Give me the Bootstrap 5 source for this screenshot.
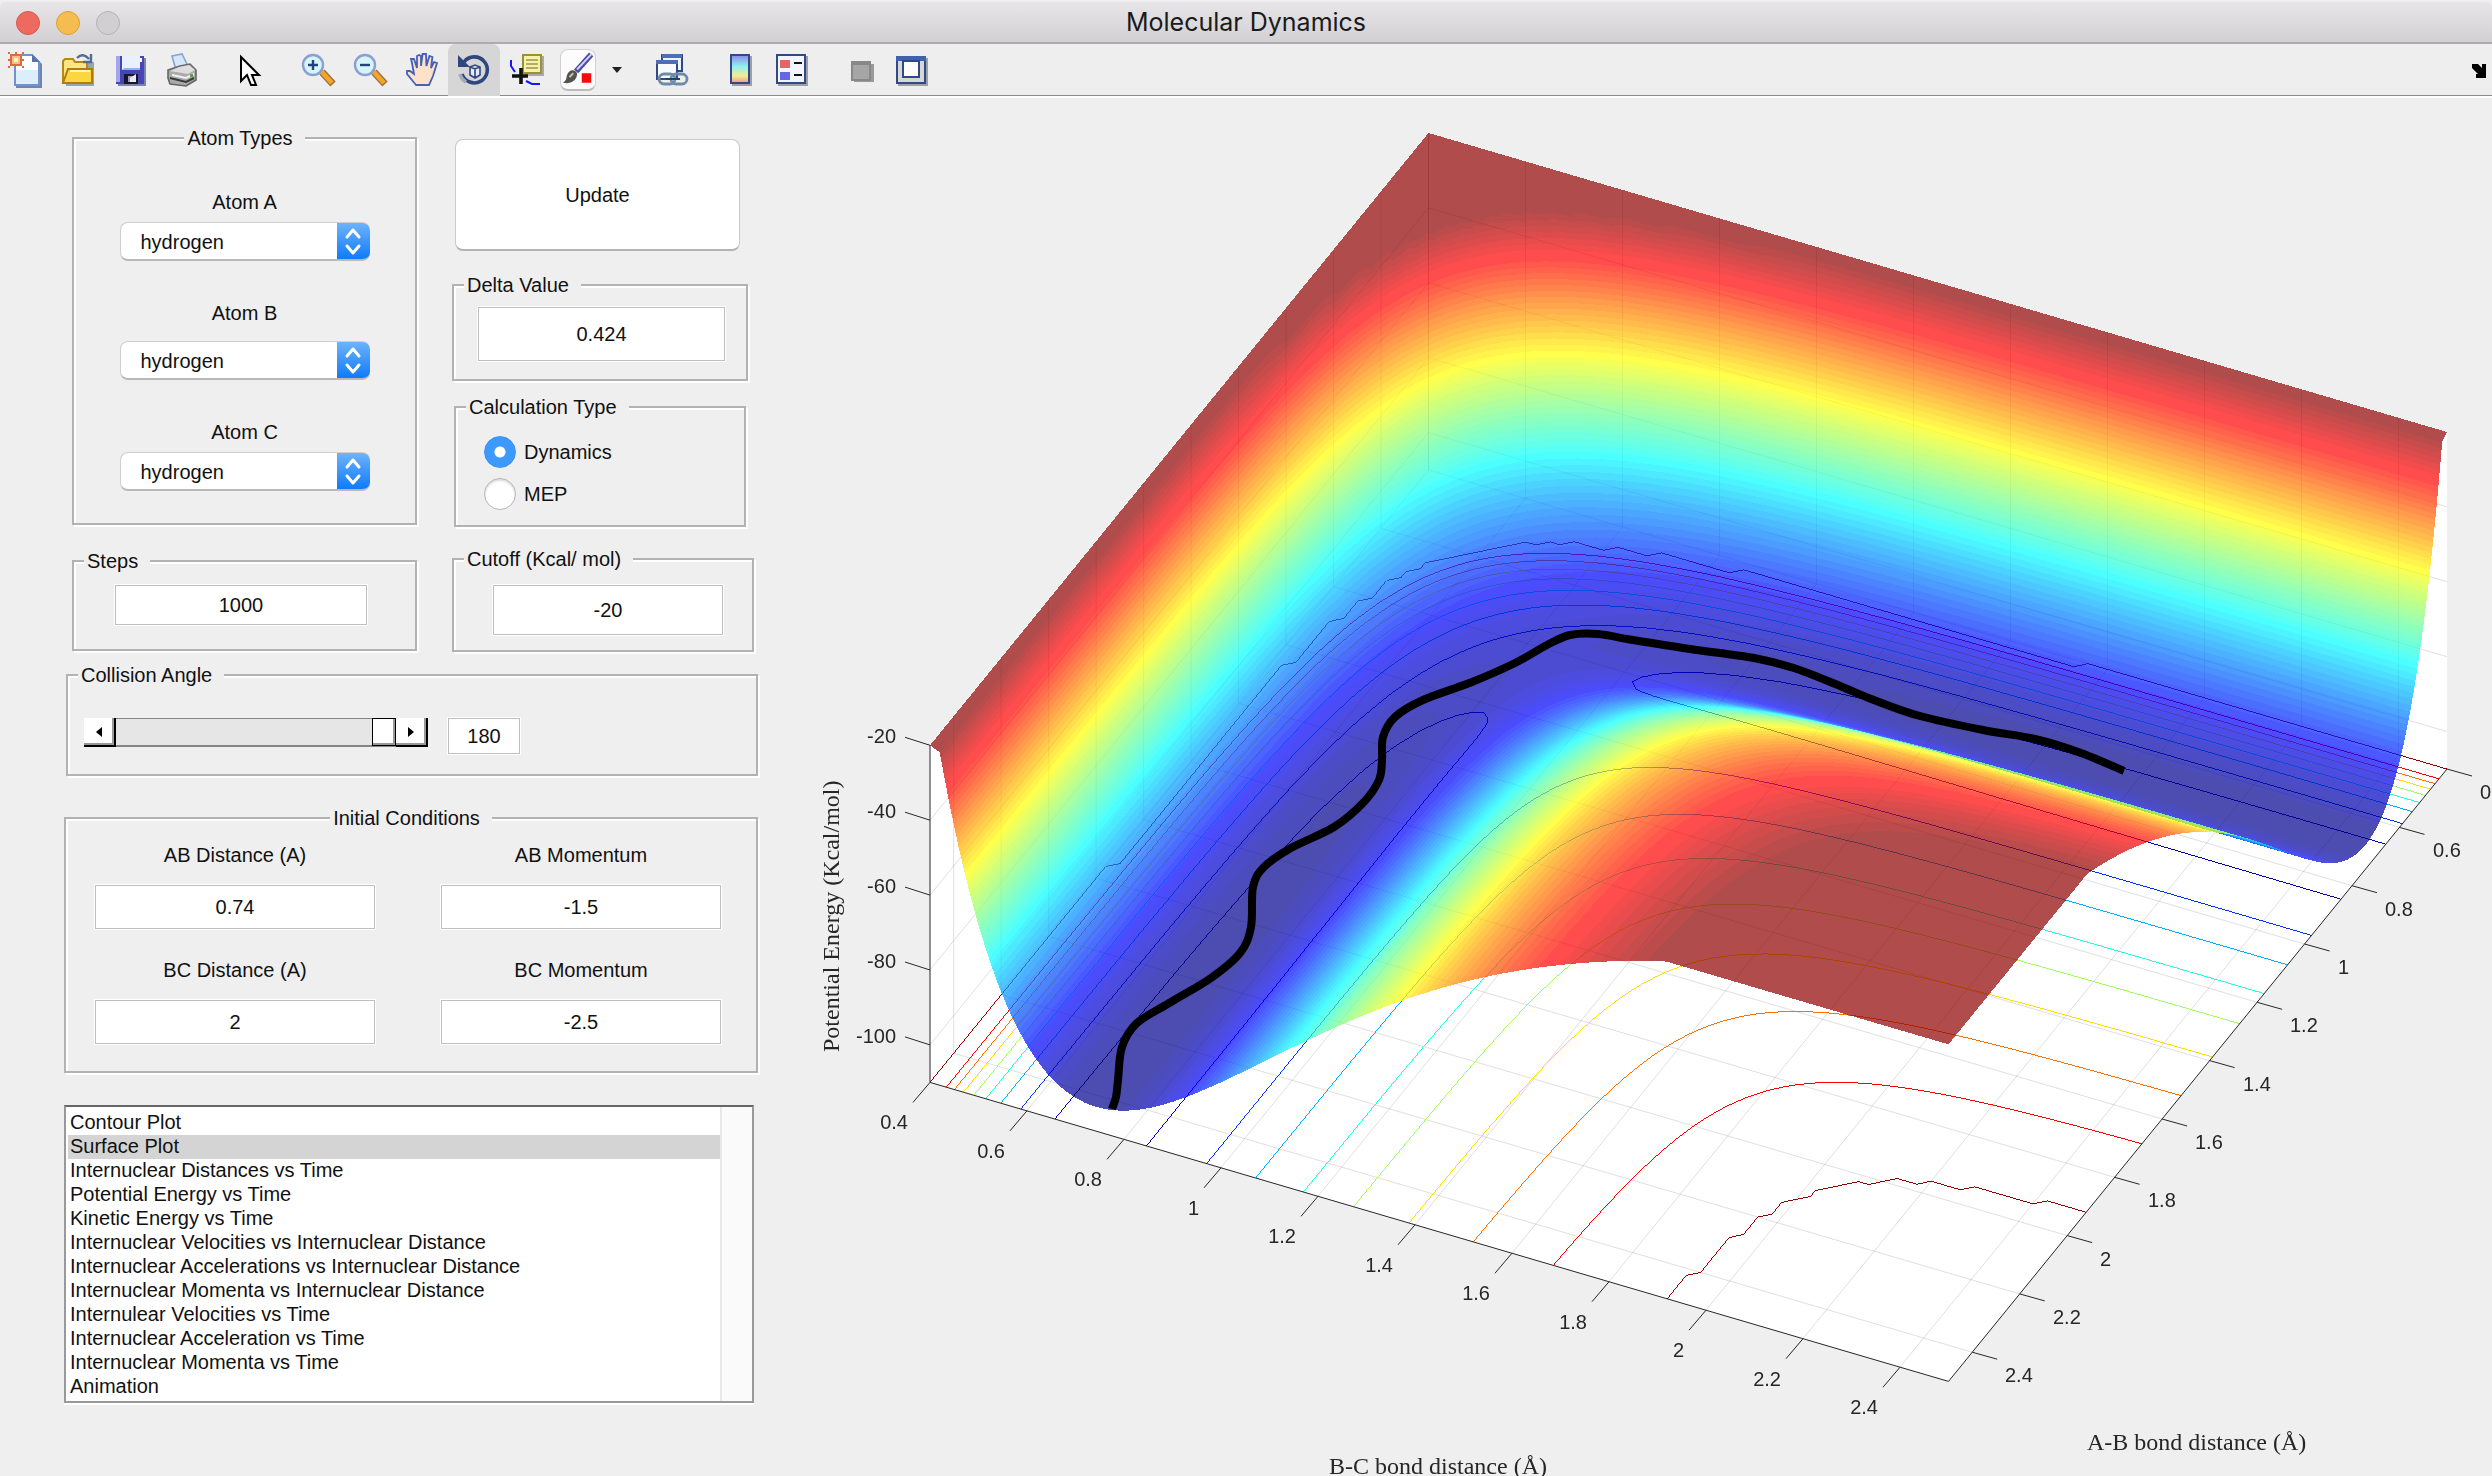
<!DOCTYPE html>
<html lang="en">
<head>
<meta charset="utf-8">
<meta name="viewport" content="width=device-width, initial-scale=1">
<title>Molecular Dynamics</title>
<link href="https://cdn.jsdelivr.net/npm/bootstrap@5.3.0/dist/css/bootstrap.min.css" rel="stylesheet">
<style>
:root{--face:#efefef;--etch:#b2b2b2}
body{background:var(--face);color:#111;font-family:"Liberation Sans",Arial,sans-serif;font-size:20px;line-height:24px;overflow-x:hidden}
.titlebar{height:44px;background:linear-gradient(#f4f2f4,#e7e5e7 3px,#d2d0d2);border-bottom:2px solid #adabad;border-radius:8px 8px 0 0;display:grid;grid-template-columns:1fr auto 1fr}
.titlebar h1{font:400 25px/45px Inter,"Liberation Sans",sans-serif;color:#1a1a1a}
.light{width:24px;height:24px;border-radius:50%;border:1px solid #d9584e;background:#ee6a5f;padding:0}
.light.mid{background:#f5bd4f;border-color:#d8a03c}
.light.off{background:#d1cfd1;border-color:#b4b2b4}
.tools{height:54px;background:#eee;border-bottom:2px solid #fff;box-shadow:inset 0 -1px 0 #8c8c8c}
.tool{width:52px;height:52px;border:0;background:none;padding:0;display:flex;align-items:center;justify-content:center}
.tool svg{display:block;width:36px;height:36px}
.tool svg.caret{width:10px}.tool svg.dock{width:18px}
.tool.active{background:#d6d6d6;border-radius:8px 8px 0 0}
.tool .swatchbox{border:1px solid #d0d0d0;border-bottom:2px solid #bcbcbc;border-radius:8px;background:#fcfcfc;height:42px}
.panel-side{width:800px;flex:none;padding:28px 40px 0 64px}
.etched{border:2px solid var(--etch);box-shadow:2px 2px 0 #fff,inset 2px 2px 0 #fff;margin:0 2px 2px 0}
.etched legend{float:none;width:auto;font-size:20px;line-height:24px;margin:0 0 0 10px;padding:0 12px 0 3px;background:var(--face)}
.etched.centred legend{margin:0 auto}
.col-a{width:347px}.col-b{width:304px}
.entry{border:1px solid #bfbfbf;box-shadow:0 0 0 1px #fff;background:#fff;border-radius:0;text-align:center;padding:0;font-size:20px;line-height:24px;color:#111;display:block}
.popup{appearance:none;width:250px;height:39px;border:1px solid #cfcfcf;border-bottom:2px solid #b9b9b9;border-right:0;border-radius:8px;padding:2px 40px 0 20px;font-size:20px;line-height:24px;color:#111;background:#fff url("data:image/svg+xml,%3Csvg xmlns='http://www.w3.org/2000/svg' width='33' height='39'%3E%3Cdefs%3E%3ClinearGradient id='g' x2='0' y2='1'%3E%3Cstop stop-color='%236fb5fb'/%3E%3Cstop offset='1' stop-color='%230a77fb'/%3E%3C/linearGradient%3E%3C/defs%3E%3Cpath fill='url(%23g)' d='M0 0h33v39H0z'/%3E%3Cpath fill='none' stroke='%23fff' stroke-width='3' stroke-linecap='round' stroke-linejoin='round' d='M10 15l6-7 6 7M10 24l6 7 6-7'/%3E%3C/svg%3E") right top/33px 39px no-repeat;background-origin:border-box}
.push{display:block;width:285px;height:112px;margin:13px 0 0 3px;border:1px solid #c9c9c9;border-bottom:2px solid #b3b3b3;border-radius:8px;background:#fff;color:#111;font-size:20px;line-height:24px}
.pick{appearance:none;width:32px;height:32px;border-radius:50%;border:1px solid #b5b5b5;background:#fff;margin:0;box-shadow:inset 0 2px 2px #ddd}
.pick:checked{border-color:#3a93f8;box-shadow:none;background:radial-gradient(circle,#fff 5px,#3d9afc 6px)}
.steps{margin-top:24px}.steps .entry{width:252px;height:40px;margin:12px auto 24px 41px}
.delta{width:296px;margin-top:22px}.delta .entry{width:247px;height:54px;margin:10px auto 18px 24px}
.calc{width:292px;margin:14px 0 0 2px}.calc-list{display:grid;row-gap:10px;padding:17px 0 15px 28px}
.cutoff{width:302px;margin-top:20px}.cutoff .entry{width:230px;height:50px;margin:14px auto 15px 39px}
.collision{margin:9px 2px 0 2px}.collision-row{margin:31px 0 20px 16px}
.degrees{width:72px;height:36px;margin-left:20px}
.arrow-btn{width:32px;height:29px;border:0;padding:0;background:#fff;border-right:2px solid #000;border-bottom:2px solid #000;box-shadow:inset -2px -2px 0 #999;display:flex;align-items:center;justify-content:center}
.angle{appearance:none;width:280px;height:29px;margin:0;background:#e6e6e6;border-top:1px solid #858585;border-bottom:2px solid #858585}
.angle::-webkit-slider-thumb{appearance:none;width:24px;height:28px;border:1px solid #000;border-radius:0;background:#fff;box-shadow:inset -2px -2px 0 #999}
.initial{margin:30px 0 0 0;width:694px}
.pairs{display:grid;grid-template-columns:280px 280px;column-gap:66px;row-gap:29px;padding:13px 0 27px 29px}
.pairs label{display:block;text-align:center;margin-bottom:18px}.pairs .entry{width:280px;height:44px}
.plots{appearance:none;display:block;width:690px;height:298px;margin-top:32px;border:2px solid #999;border-top-color:#666;border-radius:0;background:linear-gradient(90deg,#e9e9e9 2px,#fafafa 2px) right/32px 100% no-repeat #fff;box-shadow:0 2px 0 #fff;font-size:20px;line-height:24px;color:#111;padding:4px 32px 2px 2px;overflow:hidden}
.plots option{padding:0 2px;min-height:24px;line-height:24px;color:#111}
.plots option:checked{background:linear-gradient(#d4d4d4,#d4d4d4);color:#111}
.chart{position:relative;min-width:0}
.chart canvas{display:block;width:100%;height:auto}
.chart svg{position:absolute;inset:0;width:100%;height:100%}
.axis-line{stroke:#262626;stroke-width:1;fill:none}
.tick-label{font:20px "Liberation Sans",Arial,sans-serif;fill:#262626}
.axis-title{font:24px "Liberation Serif","Times New Roman",serif;fill:#262626}
</style>
<script src="https://cdn.jsdelivr.net/npm/bootstrap@5.3.0/dist/js/bootstrap.bundle.min.js"></script>
</head>
<body>
<header class="titlebar">
  <div class="d-flex align-items-center gap-3 ps-3">
    <button class="light" aria-label="Close"></button><button class="light mid" aria-label="Minimise"></button><button class="light off" aria-label="Zoom window"></button>
  </div>
  <h1 class="m-0">Molecular Dynamics</h1>
</header>

<nav class="tools d-flex align-items-start" aria-label="Figure tools">
  <button class="tool" aria-label="New figure"><svg viewBox="0 0 18 18"><path d="M4 2h9l4 4v12H4z" fill="#7384a8"/><path d="M3 1h9.500l3.500 3.500V17H3z" fill="#fff"/><path d="M4 9h11v7H4z" fill="#dceefc"/><path d="M3.500 1.500H12l3.500 3.500v11.500h-12z" fill="none" stroke="#6f93d2"/><path d="M12 1v4h4z" fill="#5873ae"/><path d="M1.500 1.500h5v5h-5z" fill="#f6c08c" stroke="#dd6a45"/><path d="M3 3h2v2H3z" fill="#fff3b0"/><path d="M0 0h1v1H0zM7 0h1v1H7zM0 7h1v1H0zM7 7h1v1H7zM3.500 0h1v1h-1zM0 3.500h1v1H0zM7 3.500h1v1H7z" fill="#dd6a45"/></svg></button>
  <button class="tool" aria-label="Open"><svg viewBox="0 0 18 18"><path d="M2 5h15v12H3z" fill="#9aa3b0"/><path d="M1.500 15.500V4.500l1-1h4l1 1.500h6v3" fill="#ffe680" stroke="#b58a12"/><path d="M1.500 15.500L4 8.500h12v7z" fill="#fbd63f" stroke="#b07c10"/><path d="M5 9.500h10" stroke="#fff7b5"/><path d="M8.500 3q3-3 6 0.500M15.500 1v4h-4" fill="none" stroke="#526c95" stroke-width="1.200"/></svg></button>
  <button class="tool" aria-label="Save"><svg viewBox="0 0 18 18"><path d="M3 3h14v14H3z" fill="#7a86a5"/><path d="M2 2h14v14H2z" fill="#4745b4"/><path d="M2 2h2v13H2z" fill="#a3a6ed"/><path d="M5 2h9v7H5z" fill="#e9f1ff"/><path d="M5 9h9V8H6z" fill="#8eb6ee"/><path d="M6 11h7v5H6z" fill="#15152b"/><path d="M8 12h3v3H8z" fill="#9c9ca8"/><path d="M9 13l3-2v4H9z" fill="#e8e8ee"/><path d="M14 3h1v2h-1z" fill="#fff"/></svg></button>
  <button class="tool" aria-label="Print"><svg viewBox="0 0 18 18"><path d="M4 2l5-1 3 6-6 2z" fill="#d3e6fd" stroke="#8ba2cc" stroke-width=".8"/><path d="M2 9l6-2 5-1 3 3v5l-5 3-8-1-1-3z" fill="#aaa" stroke="#666" stroke-width=".8"/><path d="M3 9.500l9 1.500 3.500-2-3-2.500-5 1z" fill="#ddd"/><path d="M3 13l8 2 4-2" stroke="#3a3a3a" fill="none"/><path d="M4 11.500l7 1.500 4-2" stroke="#f1f1f1" fill="none"/><path d="M13 11h1.500v1.500H13z" fill="#58a34b"/></svg></button>
  <button class="tool ms-3" aria-label="Edit plot"><svg viewBox="0 0 18 18"><path d="M4.500 2.500v12l3-3 2 5h2.500l-2-5h3.500z" fill="#fff" stroke="#000"/></svg></button>
  <button class="tool ms-3" aria-label="Zoom in"><svg viewBox="0 0 18 18"><path d="M11 10l5.500 6" stroke="#9a7140" stroke-width="3.600"/><path d="M10.500 9.500l5.500 6" stroke="#f5a52b" stroke-width="2.400"/><circle cx="6.500" cy="6.500" r="5" fill="#d7f4f7" stroke="#8a9fd4" stroke-width="1.200"/><path d="M4 6.500h5M6.500 4v5" stroke="#22437f" stroke-width="1.200"/></svg></button>
  <button class="tool" aria-label="Zoom out"><svg viewBox="0 0 18 18"><path d="M11 10l5.500 6" stroke="#9a7140" stroke-width="3.600"/><path d="M10.500 9.500l5.500 6" stroke="#f5a52b" stroke-width="2.400"/><circle cx="6.500" cy="6.500" r="5" fill="#d7f4f7" stroke="#8a9fd4" stroke-width="1.200"/><path d="M4 6.500h5" stroke="#22437f" stroke-width="1.200"/></svg></button>
  <button class="tool" aria-label="Pan"><svg viewBox="0 0 18 18"><path d="M6 16.500L1.500 11V9.500h1.500l2 1.500L4 5.500l-.500-2h1.500L6.500 8V2l1-.500 1 .500v5l.8-6h1.700l.2 6 1.500-5 1.500.5-.7 5.500 1.500-3 1.500.5-2 6.500-2 4.500z" fill="#fde1c9" stroke="#4460b8" stroke-width=".9"/></svg></button>
  <button class="tool active" aria-label="Rotate 3D" aria-pressed="true"><svg viewBox="0 0 18 18"><path d="M4 5a6.500 6.500 0 1 1-1 6" fill="none" stroke="#2f477e" stroke-width="1.800"/><path d="M2 11a6.500 6.500 0 0 0 3 4" fill="none" stroke="#a4a9b7" stroke-width="1.800"/><path d="M1 1.500v6h6z" fill="#2f477e"/><path d="M7 7.500l2.500-1 2.500 1v4l-2.500 1.500L7 11.500zM7 7.500l2.500 1 2.500-1M9.500 8.500V13" fill="#e6ecf7" stroke="#2f477e" stroke-width=".8"/></svg></button>
  <button class="tool" aria-label="Data cursor"><svg viewBox="0 0 18 18"><path d="M8 2h10v10H8z" fill="#a9a9a9"/><path d="M7.500 1.500h9v9h-9z" fill="#f6f3a7" stroke="#9a9130"/><path d="M9 4h6M9 6h6M9 8h6" stroke="#99955a" stroke-width=".8"/><path d="M1.500 4v3l2 3M9 14.500l3 1.500h4" fill="none" stroke="#1616ff"/><path d="M2 12h8M6.500 8v8" stroke="#111" stroke-width="1.800"/></svg></button>
  <button class="tool" aria-label="Brush"><svg class="swatchbox" viewBox="0 0 18 18"><path d="M8 10L16 1" stroke="#4b4ba5" stroke-width="3"/><path d="M8.500 9L16 1" stroke="#d6d6f8" stroke-width="1"/><path d="M1 16q2-1 2-3.500Q4 9 7 9.500q2.500 1 1 4Q6 17 1 16z" fill="#55544c"/><path d="M4.500 13l2-2" stroke="#c9c8bb"/><path d="M11 11h5v5h-5z" fill="#f90b0b"/></svg></button>
  <button class="tool w-auto ps-2" aria-label="Brush colours"><svg class="caret" viewBox="0 0 10 10"><path d="M0 2h10L5 8z" fill="#222"/></svg></button>
  <button class="tool ms-4" aria-label="Link plot"><svg viewBox="0 0 18 18"><path d="M4 1.500h10v8H4z" fill="#eef3fb" stroke="#2f4a86"/><path d="M4 1h10v2H4z" fill="#4b6fbb"/><path d="M1.500 4.500h10v9h-10z" fill="#f8faff" stroke="#2f4a86"/><path d="M1 4h11v2H1z" fill="#4b6fbb"/><rect x="2.500" y="11" width="8" height="5" rx="2.500" fill="none" stroke="#6e8ba8" stroke-width="1.400"/><rect x="8.500" y="11" width="8" height="5" rx="2.500" fill="none" stroke="#6e8ba8" stroke-width="1.400"/><path d="M6 13.500h7" stroke="#1d4468"/></svg></button>
  <button class="tool ms-3" aria-label="Insert colorbar"><svg viewBox="0 0 18 18"><defs><linearGradient id="cb" x2="0" y2="1"><stop stop-color="#8f86e8"/><stop offset=".4" stop-color="#8ff0f0"/><stop offset=".75" stop-color="#f1ee90"/><stop offset="1" stop-color="#f29393"/></linearGradient></defs><path d="M5 2h10v15H5z" fill="#9d9fa5"/><path d="M4.500 1.500h9v14h-9z" fill="url(#cb)" stroke="#2f4a86"/></svg></button>
  <button class="tool" aria-label="Insert legend"><svg viewBox="0 0 18 18"><path d="M2 2h15v15H2z" fill="#9d9fa5"/><path d="M1.500 1.500h14v14h-14z" fill="#f2f6ff" stroke="#2f4a86"/><path d="M3 4h5v4H3z" fill="#e46767"/><path d="M3 10h5v4H3z" fill="#6665e4"/><path d="M10 5.500h4M10 11.500h4" stroke="#111"/></svg></button>
  <button class="tool ms-3" aria-label="Hide plot tools" disabled><svg viewBox="0 0 18 18"><path d="M6 6h10v9H6z" fill="#999"/><path d="M5 5h9v9H5z" fill="#a6a6a6" stroke="#888"/><path d="M5 5h9v1.500H5z" fill="#888"/></svg></button>
  <button class="tool" aria-label="Show plot tools"><svg viewBox="0 0 18 18"><path d="M2 3h15v14H2z" fill="#9d9fa5"/><path d="M1.500 2.500h14v13h-14z" fill="#d8d8d2" stroke="#2f4a86"/><path d="M1 2h15v2.500H1z" fill="#3e62b0"/><path d="M4.500 4.500h8v8h-8z" fill="#fff" stroke="#2f4a86"/></svg></button>
  <button class="tool ms-auto w-auto pe-1" aria-label="Dock figure"><svg class="dock" viewBox="0 0 9 18"><path d="M1 6h3l2 2V6h2v7H3v-2h1L1 8z" fill="#000"/></svg></button>
</nav>

<main class="d-flex align-items-start">
  <form class="panel-side">
    <div class="d-flex ps-2">
      <div class="col-a">
        <fieldset class="etched centred">
          <legend>Atom Types</legend>
          <div class="d-flex flex-column align-items-center pb-4 mb-2">
            <label for="atomA" class="mb-2 mt-4 pt-3">Atom A</label>
            <select id="atomA" class="popup"><option>hydrogen</option></select>
            <label for="atomB" class="mb-3 mt-4 pt-3">Atom B</label>
            <select id="atomB" class="popup"><option>hydrogen</option></select>
            <label for="atomC" class="mb-2 mt-4 pt-3">Atom C</label>
            <select id="atomC" class="popup"><option>hydrogen</option></select>
          </div>
        </fieldset>
        <fieldset class="etched steps">
          <legend>Steps</legend>
          <input class="entry" aria-label="Steps" value="1000">
        </fieldset>
      </div>
      <div class="col-b ms-auto me-1">
        <button type="button" class="push">Update</button>
        <fieldset class="etched delta"><legend>Delta Value</legend><input class="entry" aria-label="Delta Value" value="0.424"></fieldset>
        <fieldset class="etched calc"><legend>Calculation Type</legend>
          <div class="calc-list">
            <div class="d-flex align-items-center gap-2"><input class="pick" type="radio" name="calc" id="dyn" checked><label for="dyn">Dynamics</label></div>
            <div class="d-flex align-items-center gap-2"><input class="pick" type="radio" name="calc" id="mep"><label for="mep">MEP</label></div>
          </div>
        </fieldset>
        <fieldset class="etched cutoff"><legend>Cutoff (Kcal/ mol)</legend><input class="entry" aria-label="Cutoff" value="-20"></fieldset>
      </div>
    </div>
    <fieldset class="etched collision"><legend>Collision Angle</legend>
      <div class="collision-row d-flex">
        <button type="button" class="arrow-btn" aria-label="Decrease angle"><svg width="6" height="10"><path d="M6 0v10L0 5z"/></svg></button>
        <input type="range" class="angle" min="0" max="180" value="180" aria-label="Collision angle">
        <button type="button" class="arrow-btn" aria-label="Increase angle"><svg width="6" height="10"><path d="M0 0v10l6-5z"/></svg></button>
        <input class="entry degrees" aria-label="Angle in degrees" value="180">
      </div>
    </fieldset>
    <fieldset class="etched centred initial"><legend>Initial Conditions</legend>
      <div class="pairs">
        <div><label for="abd">AB Distance (A)</label><input class="entry" id="abd" value="0.74"></div>
        <div><label for="abm">AB Momentum</label><input class="entry" id="abm" value="-1.5"></div>
        <div><label for="bcd">BC Distance (A)</label><input class="entry" id="bcd" value="2"></div>
        <div><label for="bcm">BC Momentum</label><input class="entry" id="bcm" value="-2.5"></div>
      </div>
    </fieldset>
    <select class="plots" size="12" aria-label="Plot type">
      <option>Contour Plot</option><option selected>Surface Plot</option><option>Internuclear Distances vs Time</option><option>Potential Energy vs Time</option><option>Kinetic Energy vs Time</option><option>Internuclear Velocities vs Internuclear Distance</option><option>Internuclear Accelerations vs Internuclear Distance</option><option>Internuclear Momenta vs Internuclear Distance</option><option>Internulear Velocities vs Time</option><option>Internuclear Acceleration vs Time</option><option>Internuclear Momenta vs Time</option><option>Animation</option>
    </select>
  </form>
  <figure class="chart flex-grow-1 m-0">
    <canvas id="surface" width="1692" height="1378"></canvas>
    <svg id="axes" viewBox="0 0 1692 1378" role="img" aria-label="Potential energy surface"></svg>
  </figure>
</main>
<script>
const OX = 800, OY = 98, W = 1692, H = 1378, LO = 0.4, HI = 2.5, CUT = -20, FLOOR = -110;
// Oblique view: screen position of (BC, AB, energy)
const P = (bc, ab, z) => [1428.5 - OX + (bc - LO) * 485 - (ab - LO) * 237.4,
                          470 - OY + (bc - LO) * 142.4 + (ab - LO) * 291.6 - (z - FLOOR) * 3.745];
// LEPS potential of collinear H + H2
const D = 103.6, BETA = 1.974, RE = 0.743, SATO = 0.187;
function pair(r) {
  const u = Math.exp(-BETA * (r - RE)), s = D * (u * u - 2 * u), t = D / 2 * (u * u + 2 * u);
  return [(s + t + SATO * (s - t)) / 2, (s - t + SATO * (s + t)) / 2];
}
function V(a, b) {
  const [q1, j1] = pair(a), [q2, j2] = pair(b), [q3, j3] = pair(a + b);
  return (q1 + q2 + q3 - Math.sqrt(((j1 - j2) ** 2 + (j2 - j3) ** 2 + (j1 - j3) ** 2) / 2)) / (1 + SATO);
}
const N = 106, STEP = 0.02, grid = [];
let lowest = 0;
for (let i = 0; i < N; i++) {
  grid.push([]);
  for (let j = 0; j < N; j++) {
    const v = Math.min(CUT, V(LO + i * STEP, LO + j * STEP));
    grid[i].push(v); lowest = Math.min(lowest, v);
  }
}
const clamp = v => Math.max(0, Math.min(1, v));
const jet = [...Array(64)].map((_, i) => { const v = (i + 1) / 64;
  return [Math.min(4 * v - 1.5, 4.56 - 4 * v), Math.min(4 * v - .5, 3.5 - 4 * v), Math.min(4 * v + .5, 2.5 - 4 * v)].map(c => 255 * clamp(c)); });
const colour = v => jet[Math.max(0, Math.min(63, Math.floor((v - lowest) / (CUT - lowest) * 64)))];

const ctx = document.getElementById('surface').getContext('2d');
function path(pts, close) { ctx.beginPath(); pts.forEach((p, k) => k ? ctx.lineTo(...p) : ctx.moveTo(...p)); if (close) ctx.closePath(); }
ctx.fillStyle = '#fff';
path([P(LO, HI, CUT), P(LO, LO, CUT), P(HI, LO, CUT), P(HI, LO, FLOOR), P(HI, HI, FLOOR), P(LO, HI, FLOOR)], true); ctx.fill();
ctx.strokeStyle = 'rgba(38,38,38,.15)'; ctx.lineWidth = 1;
for (let k = 0; k < 11; k++) {
  const t = LO + k * .2;
  path([P(t, LO, CUT), P(t, LO, FLOOR), P(t, HI, FLOOR)]); ctx.stroke();
  path([P(LO, t, CUT), P(LO, t, FLOOR), P(HI, t, FLOOR)]); ctx.stroke();
}
for (let z = -100; z < CUT; z += 20) { path([P(LO, HI, z), P(LO, LO, z), P(HI, LO, z)]); ctx.stroke(); }

const img = ctx.getImageData(0, 0, W, H), px = img.data;
function dot(x, y, c) { if (x < 0 || y < 0 || x >= W || y >= H) return; const o = (y * W + x) * 4; px[o] = c[0]; px[o + 1] = c[1]; px[o + 2] = c[2]; px[o + 3] = 255; }
// One dot per pixel column or row, sampled at pixel centres so joined pieces stay even
function line(a, b, c) {
  const m = Math.abs(b[0] - a[0]) >= Math.abs(b[1] - a[1]) ? 0 : 1, [p, q] = a[m] <= b[m] ? [a, b] : [b, a];
  for (let k = Math.ceil(p[m] - .5); k < Math.ceil(q[m] - .5); k++) {
    const o = Math.floor(p[1 - m] + (q[1 - m] - p[1 - m]) * (k + .5 - p[m]) / (q[m] - p[m]));
    m ? dot(o, k, c) : dot(k, o, c);
  }
}
// Contours on the floor
for (let level = -100; level <= CUT; level += 10) {
  const c = colour(level);
  for (let i = 0; i < N - 1; i++) for (let j = 0; j < N - 1; j++) {
    const q = [[i, j], [i + 1, j], [i + 1, j + 1], [i, j + 1]], hit = [];
    for (let e = 0; e < 4; e++) {
      const [a, b] = q[e], [a2, b2] = q[(e + 1) % 4], v = grid[a][b], w = grid[a2][b2];
      if ((v >= level) !== (w >= level)) { const t = (level - v) / (w - v); hit.push(P(LO + (a + (a2 - a) * t) * STEP, LO + (b + (b2 - b) * t) * STEP, FLOOR)); }
    }
    if (hit.length >= 2) line(hit[0], hit[1], c);
    if (hit.length === 4) line(hit[2], hit[3], c);
  }
}
// Translucent surface, drawn from the far corner to the near one
function tri(a, b, c) {
  const s = [a, b, c].sort((p, q) => p[1] - q[1]), [A, B, C] = s;
  const det = (B[0] - A[0]) * (C[1] - A[1]) - (C[0] - A[0]) * (B[1] - A[1]);
  if (Math.abs(det) < 1e-9) return;
  const gx = ((B[2] - A[2]) * (C[1] - A[1]) - (C[2] - A[2]) * (B[1] - A[1])) / det;
  const gy = ((B[0] - A[0]) * (C[2] - A[2]) - (C[0] - A[0]) * (B[2] - A[2])) / det;
  const at = (p, q, y) => p[0] + (q[0] - p[0]) * (y - p[1]) / (q[1] - p[1]);
  for (let y = Math.ceil(A[1] - .5); y < Math.ceil(C[1] - .5); y++) {
    const yc = y + .5, l = at(A, C, yc), r = yc < B[1] ? at(A, B, yc) : at(B, C, yc);
    for (let x = Math.ceil(Math.min(l, r) - .5); x < Math.ceil(Math.max(l, r) - .5); x++) {
      const k = colour(A[2] + gx * (x + .5 - A[0]) + gy * (yc - A[1]) + 1e-6), o = (y * W + x) * 4;
      for (let m = 0; m < 3; m++) px[o + m] = .7 * k[m] + .3 * px[o + m];
      px[o + 3] = 255;
    }
  }
}
const node = (i, j) => [...P(LO + i * STEP, LO + j * STEP, grid[i][j]), grid[i][j]];
for (let i = 0; i < N - 1; i++) for (let j = 0; j < N - 1; j++) {
  const a = node(i, j), b = node(i + 1, j), c = node(i + 1, j + 1), d = node(i, j + 1);
  tri(a, b, c); tri(a, c, d);
}
ctx.putImageData(img, 0, 0);

// Trajectory
const track = [[2124,771],[2081,753],[2035,739],[1983,730],[1920,716],[1874,700],[1840,686],[1794,668],[1754,658],[1690,649],[1633,640],[1598,634],[1570,635],[1547,645],[1515,663],[1472,682],[1423,700],[1395,717],[1383,737],[1382,760],[1379,780],[1363,803],[1334,827],[1291,848],[1264,867],[1253,887],[1251,927],[1240,953],[1211,978],[1171,1002],[1137,1023],[1122,1047],[1118,1080],[1116,1097],[1112,1109]].map(p => [p[0] - OX, p[1] - OY]);
ctx.strokeStyle = '#000'; ctx.lineWidth = 8; ctx.lineJoin = 'round'; ctx.beginPath(); ctx.moveTo(...track[0]);
for (let k = 0; k < track.length - 1; k++) {
  const p0 = track[Math.max(0, k - 1)], p1 = track[k], p2 = track[k + 1], p3 = track[Math.min(track.length - 1, k + 2)];
  ctx.bezierCurveTo(p1[0] + (p2[0] - p0[0]) / 6, p1[1] + (p2[1] - p0[1]) / 6, p2[0] - (p3[0] - p1[0]) / 6, p2[1] - (p3[1] - p1[1]) / 6, p2[0], p2[1]);
}
ctx.stroke();

// Axes, ticks and labels
let out = '';
const seg = (a, dx, dy) => `<path class="axis-line" d="M${a[0].toFixed(1)} ${a[1].toFixed(1)}l${dx} ${dy}"/>`;
const label = (x, y, t, anchor) => `<text class="tick-label" x="${Math.round(x)}" y="${Math.round(y)}" text-anchor="${anchor}">${t}</text>`;
const corners = [P(LO, HI, CUT), P(LO, HI, FLOOR), P(HI, HI, FLOOR), P(HI, LO, FLOOR)];
out += `<polyline class="axis-line" points="${corners.map(p => p.map(n => n.toFixed(1)).join()).join(' ')}"/>`;
for (let z = -100; z <= CUT; z += 20) { const a = P(LO, HI, z); out += seg(a, -25, -8) + label(a[0] - 34, a[1] - 2, z, 'end'); }
for (let k = 0; k < 11; k++) {
  const t = LO + k * .2, s = +t.toFixed(1), a = P(t, HI, FLOOR), b = P(HI, t, FLOOR);
  out += seg(a, -17, 20) + label(a[0] - 22, a[1] + 47, s, 'end') + seg(b, 25, 7) + label(b[0] + 33, b[1] + 30, s, 'start');
}
out += `<text class="axis-title" x="529" y="1376">B-C bond distance (Å)</text><text class="axis-title" x="1287" y="1352">A-B bond distance (Å)</text><text class="axis-title" transform="translate(39 954) rotate(-90)">Potential Energy (Kcal/mol)</text>`;
document.getElementById('axes').innerHTML = out;
</script>
</body>
</html>
